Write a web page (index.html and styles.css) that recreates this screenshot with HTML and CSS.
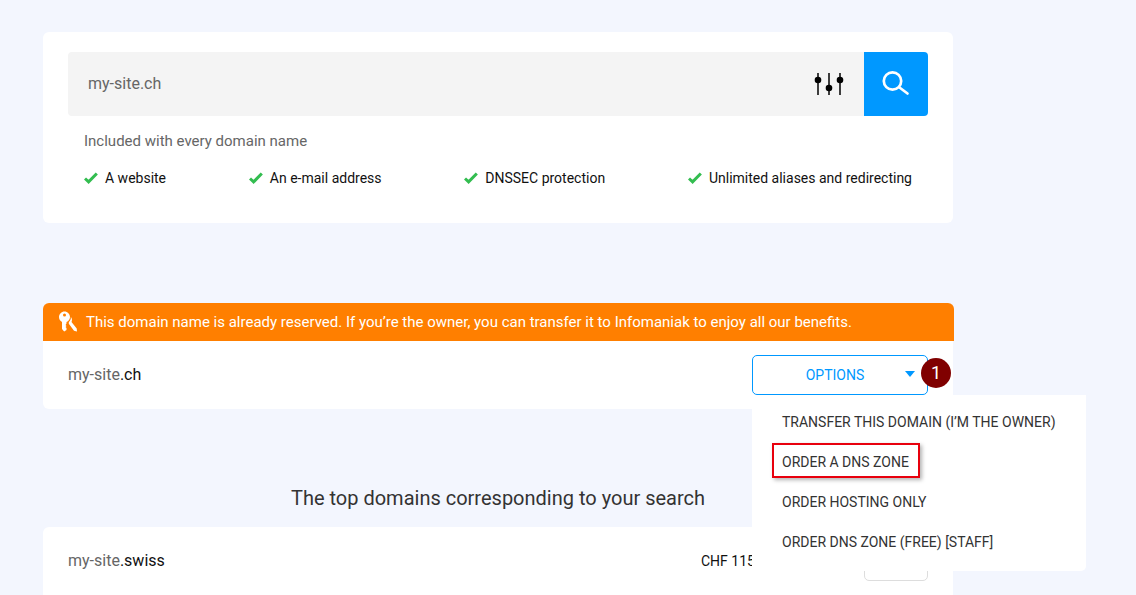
FILE: index.html
```html
<!DOCTYPE html>
<html lang="en">
<head>
<meta charset="utf-8">
<title>Domain search</title>
<link rel="stylesheet" href="styles.css">
</head>
<body>
<main class="page">
  <section class="card search-card">
    <div class="search">
      <div class="search-field">
        <span class="search-value">my-site.ch</span>
        <svg class="filters" width="30" height="24" viewBox="0 0 30 24" aria-hidden="true">
          <g stroke="#000" stroke-width="1.5" fill="none"><path d="M4 1v22M15 1v22M26 1v22"/></g>
          <circle cx="4" cy="8" r="3.300"/><circle cx="15" cy="16" r="3.300"/><circle cx="26" cy="8" r="3.300"/>
        </svg>
      </div>
      <button class="search-btn" aria-label="Search">
        <svg width="28" height="28" viewBox="0 0 28 28" aria-hidden="true" fill="none" stroke="#fff" stroke-width="2.700" stroke-linecap="round">
          <circle cx="10.500" cy="11" r="8.700"/><path d="M17.500 17.500L25.500 23.500"/>
        </svg>
      </button>
    </div>
    <p class="included">Included with every domain name</p>
    <ul class="features">
      <li class="feature"><svg class="check" width="14" height="12" viewBox="0 0 14 12"><path d="M1 6.500l3.600 3.400L12.800 1.500"/></svg>A website</li>
      <li class="feature"><svg class="check" width="14" height="12" viewBox="0 0 14 12"><path d="M1 6.500l3.600 3.400L12.800 1.500"/></svg>An e-mail address</li>
      <li class="feature"><svg class="check" width="14" height="12" viewBox="0 0 14 12"><path d="M1 6.500l3.600 3.400L12.800 1.500"/></svg>DNSSEC protection</li>
      <li class="feature"><svg class="check" width="14" height="12" viewBox="0 0 14 12"><path d="M1 6.500l3.600 3.400L12.800 1.500"/></svg>Unlimited aliases and redirecting</li>
    </ul>
  </section>

  <section class="card result-card">
    <div class="alert">
      <svg class="keys" width="20" height="22" viewBox="0 0 20 22" aria-hidden="true">
        <path fill="#fff" fill-rule="evenodd" d="M6.500 0.500C3.500 0.500 1 3 1 6c0 2.200 1.200 4 3 4.900V18l2.200 2.500L8.500 19v-2l-1-1 1-1-1-1 1-1.500v-1.400C10.500 10 12 8.200 12 6c0-3-2.500-5.500-5.500-5.500zM6.500 2.500a1.500 1.500 0 1 1 0 3 1.500 1.500 0 0 1 0-3z"/>
        <path fill="#fff" d="M12.800 6c.3 2-.5 3.800-2 5.200v1.600L16 19.800l3 .7-.3-3-5.200-6.500c.8-1.800.6-3.700-.7-5z"/>
      </svg>
      <span>This domain name is already reserved. If you’re the owner, you can transfer it to Infomaniak to enjoy all our benefits.</span>
    </div>
    <div class="result-row">
      <span class="domain">my-site<b class="tld">.ch</b></span>
      <div class="options">
        <button class="options-btn"><span class="options-label">OPTIONS</span><i class="caret"></i></button>
        <span class="badge">1</span>
        <ul class="menu">
          <li class="menu-item">TRANSFER THIS DOMAIN (I’M THE OWNER)</li>
          <li class="menu-item menu-item-marked">ORDER A DNS ZONE</li>
          <li class="menu-item">ORDER HOSTING ONLY</li>
          <li class="menu-item">ORDER DNS ZONE (FREE) [STAFF]</li>
        </ul>
      </div>
    </div>
  </section>

  <h2 class="heading">The top domains corresponding to your search</h2>

  <section class="card top-row">
    <span class="domain">my-site<b class="tld">.swiss</b></span>
    <div class="price-box">
      <span class="price">CHF 115</span>
      <button class="select-btn"></button>
    </div>
  </section>
</main>
</body>
</html>
```

FILE: styles.css
```css
*, *::after { box-sizing: border-box; }
html, body { margin: 0; height: 595px; overflow: hidden; }
body { background: #f3f6fe; font-family: Roboto, "Liberation Sans", sans-serif; color: #333; }
.page { width: 910px; margin-left: 43px; padding-top: 32px; height: 595px; }
.card { background: #fff; border-radius: 6px; }
.search-card { height: 191px; padding: 20px 25px 0; }
.search { display: flex; height: 64px; }
.search-field { flex: 1; display: flex; align-items: center; justify-content: space-between; background: #f4f4f4; border-radius: 4px 0 0 4px; padding: 0 20px; }
.search-value { font-size: 16px; color: #666; padding-bottom: 2px; }
.search-btn { width: 64px; border: 0; padding: 0; background: #0098ff; border-radius: 0 4px 4px 0; display: flex; align-items: center; justify-content: center; }
.included { margin: 16px 0 0 16px; font-size: 15px; line-height: 18px; color: #666; }
.features { list-style: none; margin: 18px 0 0; padding: 0 16px; display: flex; justify-content: space-between; }
.feature { display: flex; align-items: center; gap: 7px; font-size: 14px; line-height: 20px; color: #111; }
.check { fill: none; stroke: #33bd50; stroke-width: 3; }
.result-card { margin-top: 80px; height: 106px; }
.alert { height: 38px; margin-right: -1px; display: flex; align-items: center; gap: 8px; padding: 0 15px; background: #ff7f00; color: #fff; font-size: 15px; border-radius: 6px 6px 0 0; }
.keys { flex: none; }
.result-row { height: 68px; display: flex; align-items: center; justify-content: space-between; padding: 0 25px; }
.domain { font-size: 16px; color: #666; }
.result-row .domain { padding-bottom: 2px; }
.tld { font-weight: 400; color: #111; }
.options { position: relative; width: 176px; }
.options-btn { width: 176px; height: 40px; display: flex; align-items: center; justify-content: center; position: relative; background: #fff; border: 1px solid #0098ff; border-radius: 5px; font: 14px Roboto, sans-serif; color: #0098ff; padding: 0 10px 0 0; }
.caret { position: absolute; right: 12px; top: 15px; width: 0; height: 0; border-left: 5px solid transparent; border-right: 5px solid transparent; border-top: 6px solid #0098ff; }
.badge { position: absolute; left: 169px; top: 3px; width: 30px; height: 30px; border-radius: 50%; background: #800000; color: #fff; font-size: 18px; line-height: 30px; text-align: center; }
.menu { position: absolute; left: 0; top: 40px; width: 334px; height: 176px; margin: 0; padding: 7px 0 9px; list-style: none; background: #fff; border-radius: 0 0 5px 5px; z-index: 2; }
.menu-item { height: 40px; padding-left: 30px; font-size: 14px; line-height: 40px; color: #333; white-space: nowrap; position: relative; }
.menu-item-marked::after { content: ""; position: absolute; left: 20px; top: 1px; width: 148px; height: 35px; border: 2px solid #e8000d; box-shadow: 2px 2px 4px rgba(0,0,0,.3); }
.heading { margin: 76px 0 16px; font-size: 20px; font-weight: 400; line-height: 26px; text-align: center; color: #333; }
.top-row { height: 68px; display: flex; justify-content: space-between; padding: 0 25px; border-radius: 6px 6px 0 0; }
.top-row .domain { margin-top: 24px; line-height: 20px; height: 20px; }
.price-box { display: flex; gap: 20px; }
.price { margin-top: 24px; font-size: 14px; line-height: 20px; color: #111; width: 143px; }
.select-btn { margin-top: 20px; width: 64px; height: 34px; background: #fff; border: 1px solid #ddd; border-radius: 5px; }
```
